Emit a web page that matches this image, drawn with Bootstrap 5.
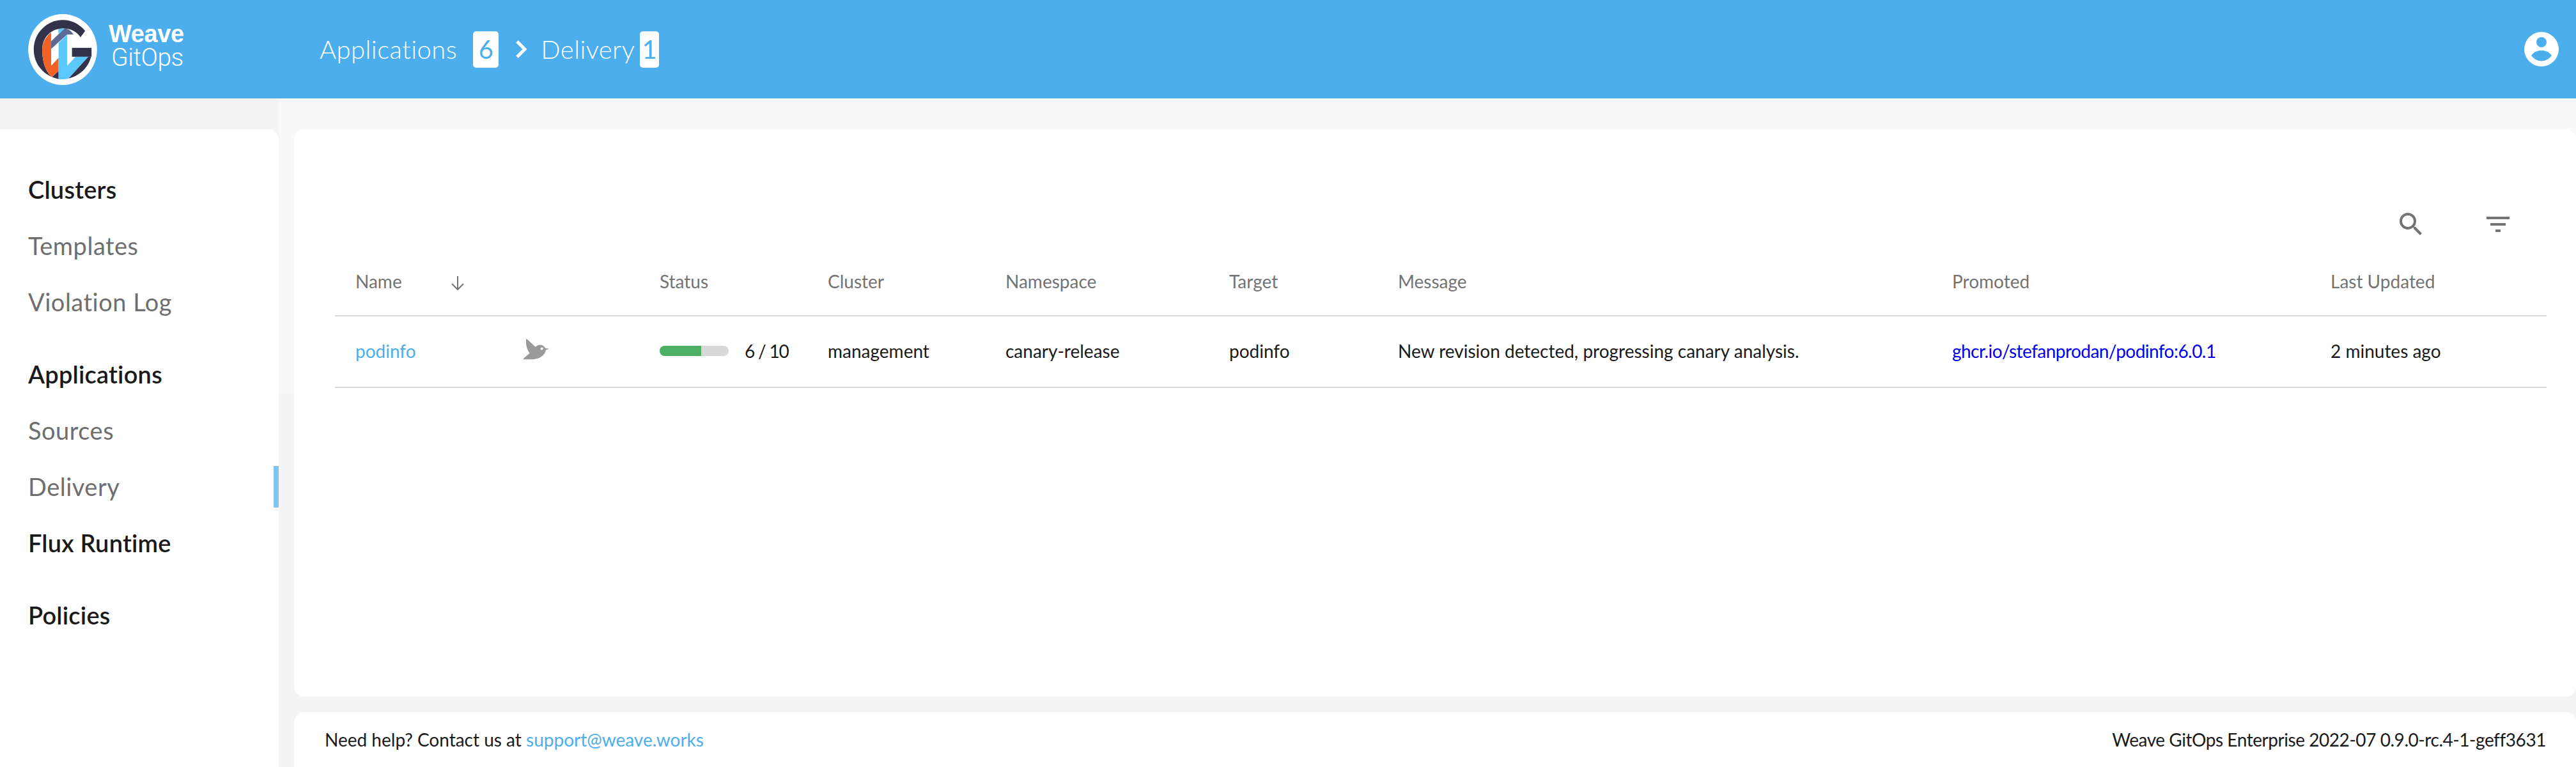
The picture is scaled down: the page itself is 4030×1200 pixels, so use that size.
<!DOCTYPE html>
<html lang="en">
<head>
    <meta charset="UTF-8">
    <meta name="viewport" content="width=device-width, initial-scale=1.0">
    <title>Weave GitOps - Delivery</title>
    <link rel="stylesheet" href="https://cdn.jsdelivr.net/npm/bootstrap@5.3.0/dist/css/bootstrap.min.css">
    <style>
        html, body { height: 1200px; overflow: hidden; }
        body { background: #f4f4f4; color: #1a1a1a; font-family: "Lato", "Liberation Sans", sans-serif; font-size: 28px; }
        a { text-decoration: none; }

        .top-bar { height: 154px; background: #4caeec; color: #fff; }
        .logo-box { width: 500px; padding-left: 44px; }
        .logo-name { margin-left: 18px; padding-bottom: 12px; font-family: "Liberation Sans", sans-serif; }
        .logo-weave { font-size: 38px; font-weight: 700; letter-spacing: -.4px; line-height: 38px; }
        .logo-gitops { font-family: "Roboto", sans-serif; font-size: 39px; font-weight: 300; letter-spacing: -.5px; line-height: 36px; padding-left: 4px; }
        .crumb-text { font-size: 40px; font-weight: 300; line-height: 1; letter-spacing: .45px; }
        .crumb-count { height: 57px; background: #fff; color: #4caeec; border-radius: 5px; font-size: 40px; font-weight: 400; }
        .count-wide { width: 40px; margin-left: 25px; }
        .count-thin { width: 30px; margin-left: 8px; }
        .crumb-sep { margin: 0 22px 0 26px; }
        .user-btn { margin-right: 27px; }

        .page-body { height: 1046px; }
        .side-col { width: 436px; padding-top: 48px; }
        .side-card { background: #fff; border-top-right-radius: 16px; padding-top: 50px; }
        .side-link { position: relative; height: 88px; padding-left: 44px; font-size: 38px; line-height: 88px; color: #6e6e6e; letter-spacing: .5px; }
        .side-head { color: #1a1a1a; font-weight: 600; letter-spacing: .2px; }
        .side-gap { margin-top: 25px; }
        .side-active::after { content: ""; position: absolute; right: 0; top: 12px; width: 8px; height: 65px; background: #7fc5ef; }

        .main-col { background: linear-gradient(#f9f9f9 462px, #f4f4f4 462px); padding: 48px 0 0 24px; }
        .main-card { height: 888px; background: #fff; border-radius: 16px; padding: 125px 46px 0 64px; }
        .tool-row { height: 48px; margin-bottom: 11px; padding-right: 52px; gap: 88px; }

        .run-table { table-layout: fixed; width: 3460px; margin: 0; }
        .run-table th, .run-table td { padding: 0 0 0 32px; vertical-align: middle; border-bottom: 2px solid #d8d8d8; font-size: 28px; white-space: nowrap; }
        .run-table th { height: 108px; color: #737373; font-weight: 400; }
        .run-table td { height: 112px; padding-bottom: 3px; color: #1a1a1a; }
        .name-link { color: #4caeec; }
        .image-link { color: #0000ee; letter-spacing: -.55px; }
        .sort-arrow { margin-left: 76px; }
        .bird-icon { display: block; margin-top: -6px; }
        .run-bar { width: 108px; height: 16px; border-radius: 8px; background: #d8d8d8; margin-right: 25px; }
        .run-bar .progress-bar { background: #4caf63; }
        .run-count { letter-spacing: -1.2px; }

        .foot-card { height: 86px; margin-top: 24px; background: #fff; border-radius: 16px 16px 0 0; padding: 0 47px 0 48px; }
        .mail-link { color: #4caeec; }
        .build-text { letter-spacing: -.45px; }
    </style>
</head>
<body>

<!-- Top bar -->
<header class="top-bar d-flex align-items-center">
    <div class="logo-box d-flex align-items-center">
        <svg width="108" height="111" viewBox="72 54 324 334">
            <ellipse cx="234" cy="221" rx="162" ry="167" fill="#fff"/>
            <path fill="#32324b" d="M340 133C312 100 275 82 234 82C158 82 98 145 98 221C98 290 145 345 215 360L215 322L185 350C155 330 138 280 138 221C138 165 180 122 234 122C270 122 298 135 318 163Z"/>
            <path fill="#f26125" d="M180 140C155 160 138 190 138 221C138 280 155 330 185 350L215 322L215 260L180 297Z"/>
            <path fill="#5e6a94" d="M180 182L243 122C262 124 276 134 285 150L255 150L180 218Z"/>
            <path fill="#5bc8fb" d="M213 124L243 122L215 150Z"/>
            <path fill="#5bc8fb" d="M215 190L255 150L255 298L295 255L355 255L262 357C245 362 230 362 215 360Z"/>
            <rect x="278" y="213" width="92" height="42" fill="#32324b"/>
            <path fill="#32324b" d="M355 255L368 255C355 305 315 345 262 357Z"/>
        </svg>
        <div class="logo-name">
            <div class="logo-weave">Weave</div>
            <div class="logo-gitops">GitOps</div>
        </div>
    </div>
    <div class="d-flex align-items-center flex-grow-1">
        <span class="crumb-text">Applications</span>
        <span class="crumb-count count-wide d-flex align-items-center justify-content-center">6</span>
        <svg class="crumb-sep" width="18" height="28" viewBox="0 0 18 28"><path d="M3 2L15 14L3 26" fill="none" stroke="#fff" stroke-width="5"/></svg>
        <span class="crumb-text">Delivery</span>
        <span class="crumb-count count-thin d-flex align-items-center justify-content-center">1</span>
    </div>
    <svg class="user-btn" width="54" height="54" viewBox="0 0 54 54">
        <circle cx="27" cy="27" r="27" fill="#fff"/>
        <circle cx="27" cy="16" r="8" fill="#4caeec"/>
        <path d="M11 37C15 31 21 29 27 29C33 29 39 31 43 37C39 42 33 45.500 27 45.500C21 45.500 15 42 11 37Z" fill="#4caeec"/>
    </svg>
</header>

<div class="page-body d-flex">
    <!-- Sidebar -->
    <aside class="side-col d-flex flex-column flex-shrink-0">
        <nav class="side-card nav flex-column flex-nowrap flex-grow-1">
            <a class="side-link side-head" href="#">Clusters</a>
            <a class="side-link" href="#">Templates</a>
            <a class="side-link" href="#">Violation Log</a>
            <a class="side-link side-head side-gap" href="#">Applications</a>
            <a class="side-link" href="#">Sources</a>
            <a class="side-link side-active" href="#">Delivery</a>
            <a class="side-link side-head" href="#">Flux Runtime</a>
            <a class="side-link side-head side-gap" href="#">Policies</a>
        </nav>
    </aside>

    <!-- Main content -->
    <main class="main-col flex-grow-1">
        <div class="main-card">
            <div class="tool-row d-flex justify-content-end">
                <svg width="48" height="48" viewBox="0 0 24 24"><path fill="#737373" d="M15.500 14h-.79l-.28-.27A6.470 6.470 0 0 0 16 9.500 6.500 6.500 0 1 0 9.500 16c1.610 0 3.090-.59 4.230-1.570l.27.28v.79l5 4.990L20.490 19l-4.990-5zm-6 0C7.010 14 5 11.990 5 9.500S7.010 5 9.500 5 14 7.010 14 9.500 11.990 14 9.500 14z"/></svg>
                <svg width="48" height="48" viewBox="0 0 24 24"><path fill="#737373" d="M10 18h4v-2h-4v2zM3 6v2h18V6H3zm3 7h12v-2H6v2z"/></svg>
            </div>
            <table class="table run-table">
                <colgroup>
                    <col style="width:260px"><col style="width:216px"><col style="width:263px"><col style="width:278px">
                    <col style="width:350px"><col style="width:264px"><col style="width:867px"><col style="width:592px"><col style="width:370px">
                </colgroup>
                <thead>
                    <tr>
                        <th>Name<svg class="sort-arrow" width="22" height="24" viewBox="0 0 22 24"><path d="M11 1V22M2 13L11 22L20 13" fill="none" stroke="#737373" stroke-width="2"/></svg></th>
                        <th></th>
                        <th>Status</th>
                        <th>Cluster</th>
                        <th>Namespace</th>
                        <th>Target</th>
                        <th>Message</th>
                        <th>Promoted</th>
                        <th>Last Updated</th>
                    </tr>
                </thead>
                <tbody>
                    <tr>
                        <td><a class="name-link" href="#">podinfo</a></td>
                        <td>
                            <svg class="bird-icon" width="45" height="37" viewBox="100 45 135 110">
                                <path fill="#9a9a9a" d="M122 52L165 92C175 80 200 75 212 98L230 101L214 106C210 130 185 150 150 150L106 150C115 140 128 130 138 122C125 105 118 80 122 52Z"/>
                                <circle cx="195" cy="100" r="6" fill="#fff"/>
                            </svg>
                        </td>
                        <td>
                            <div class="d-flex align-items-center">
                                <div class="progress run-bar"><div class="progress-bar" style="width:60%"></div></div>
                                <span class="run-count">6 / 10</span>
                            </div>
                        </td>
                        <td>management</td>
                        <td>canary-release</td>
                        <td>podinfo</td>
                        <td>New revision detected, progressing canary analysis.</td>
                        <td><a class="image-link" href="#">ghcr.io/stefanprodan/podinfo:6.0.1</a></td>
                        <td>2 minutes ago</td>
                    </tr>
                </tbody>
            </table>
        </div>
        <footer class="foot-card d-flex align-items-center justify-content-between">
            <span>Need help? Contact us at <a class="mail-link" href="#">support@weave.works</a></span>
            <span class="build-text">Weave GitOps Enterprise 2022-07 0.9.0-rc.4-1-geff3631</span>
        </footer>
    </main>
</div>

<script src="https://cdn.jsdelivr.net/npm/bootstrap@5.3.0/dist/js/bootstrap.bundle.min.js"></script>
</body>
</html>
